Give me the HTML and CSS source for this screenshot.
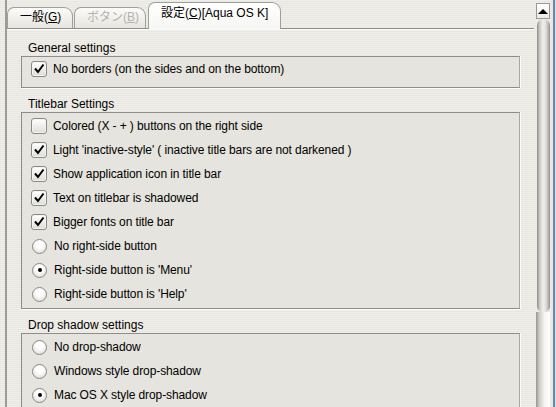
FILE: index.html
```html
<!DOCTYPE html>
<html>
<head>
  <title>設定 - Aqua OS K</title>
  <link rel="stylesheet" href="styles.css">
</head>
<body>

<div class="window">
  <div class="edge-left"></div>

  <div class="main">
    <div class="tabs">
      <div class="tab">一般(<u>G</u>)</div>
      <div class="tab disabled">ボタン(<u>B</u>)</div>
      <div class="tab active">設定(<u>C</u>)[Aqua OS K]</div>
    </div>

    <div class="panel">
      <div class="group-label">General settings</div>
      <div class="group group-general">
        <div class="row"><span class="check on"><svg viewBox="0 0 16 16"><path d="M4 7.5 L7 11 L12.5 3.5"/></svg></span>No borders (on the sides and on the bottom)</div>
      </div>

      <div class="group-label">Titlebar Settings</div>
      <div class="group group-titlebar">
        <div class="row"><span class="check"></span>Colored (X - + ) buttons on the right side</div>
        <div class="row"><span class="check on"><svg viewBox="0 0 16 16"><path d="M4 7.5 L7 11 L12.5 3.5"/></svg></span>Light 'inactive-style' ( inactive title bars are not darkened )</div>
        <div class="row"><span class="check on"><svg viewBox="0 0 16 16"><path d="M4 7.5 L7 11 L12.5 3.5"/></svg></span>Show application icon in title bar</div>
        <div class="row"><span class="check on"><svg viewBox="0 0 16 16"><path d="M4 7.5 L7 11 L12.5 3.5"/></svg></span>Text on titlebar is shadowed</div>
        <div class="row"><span class="check on"><svg viewBox="0 0 16 16"><path d="M4 7.5 L7 11 L12.5 3.5"/></svg></span>Bigger fonts on title bar</div>
        <div class="row"><span class="radio"></span>No right-side button</div>
        <div class="row"><span class="radio on"></span>Right-side button is 'Menu'</div>
        <div class="row"><span class="radio"></span>Right-side button is 'Help'</div>
      </div>

      <div class="group-label">Drop shadow settings</div>
      <div class="group group-shadow">
        <div class="row"><span class="radio"></span>No drop-shadow</div>
        <div class="row"><span class="radio"></span>Windows style drop-shadow</div>
        <div class="row"><span class="radio on"></span>Mac OS X style drop-shadow</div>
      </div>
    </div>
  </div>

  <div class="scrollbar">
    <div class="scroll-up"></div>
    <div class="thumb"></div>
    <div class="track"></div>
  </div>

  <div class="edge-right"></div>
</div>

</body>
</html>
```

FILE: styles.css
```css
body {
  margin: 0;
  width: 556px;
  height: 407px;
  overflow: hidden;
  font-family: "Liberation Sans", "Noto Sans CJK JP", sans-serif;
  font-size: 12px;
  color: #000;
  background: repeating-linear-gradient(#efeee9 0 1px, #e8e7e1 1px 2px);
}

.window {
  display: flex;
  height: 407px;
}

.edge-left {
  width: 5px;
  border-right: 2px solid #9d9c97;
}

.main {
  width: 527px;
  display: flex;
  flex-direction: column;
  overflow: hidden;
}

/* tabs */
.tabs {
  display: flex;
  align-items: flex-end;
  flex-shrink: 0;
  height: 28px;
  gap: 1px;
}

.tab {
  height: 20px;
  line-height: 19px;
  padding: 0 12px 0 12px;
  border: 1px solid #9f9e99;
  border-bottom: none;
  border-radius: 7px 9px 0 0;
  background: linear-gradient(#fbfbf9, #e6e5e0);
  white-space: nowrap;
}

.tab:first-child { width: 40px; }

.tab.disabled {
  color: #b4b3ae;
  width: 46px;
}

.tab.active {
  height: 26px;
  line-height: 21px;
  margin-left: 1px;
  margin-bottom: -1px;
  position: relative;
  z-index: 1;
  background: linear-gradient(#ffffff, #f6f6f4);
  width: 107px;
}

.tab u { text-decoration-thickness: 1px; text-underline-offset: 1px; }

/* panel */
.panel {
  flex: 1;
  min-height: 0;
  border-top: 1px solid #8f8e89;
  box-shadow: inset 0 1px 0 #fbfbf9;
  padding: 11px 14px 0 14px;
}

.group-label {
  height: 16px;
  line-height: 16px;
  padding-left: 7px;
}

.group {
  background: #e5e4de;
  border: 1px solid #8e8d88;
  border-right-color: #a8a7a2;
  box-shadow: 0 1px 0 #fbfbf9, 1px 0 0 #fbfbf9;
  margin-bottom: 8px;
  padding: 0 0 6px 0;
}

.group-titlebar { padding: 1px 0 2px 0; }
.group-shadow { padding-top: 1px; }

.row {
  height: 24px;
  display: flex;
  align-items: center;
  padding-left: 9px;
  gap: 6px;
  white-space: nowrap;
  letter-spacing: -0.1px;
}

.check {
  width: 14px;
  height: 14px;
  border: 1px solid #8a8984;
  border-radius: 3px;
  background: linear-gradient(#ffffff, #dddcd7);
  box-shadow: inset 0 0 0 1px #f4f4f2;
  display: flex;
}

.check svg {
  width: 16px;
  height: 16px;
  margin: -1px;
}

.check path {
  fill: none;
  stroke: #000;
  stroke-width: 2;
}

.radio {
  width: 13px;
  height: 13px;
  margin: 0 1px;
  border: 1px solid #8a8984;
  border-radius: 50%;
  background: radial-gradient(circle at 50% 35%, #ffffff 30%, #d6d5d0);
  display: flex;
  align-items: center;
  justify-content: center;
}

.radio.on::after {
  content: "";
  width: 4px;
  height: 4px;
  border-radius: 50%;
  background: #000;
}

/* scrollbar */
.scrollbar {
  width: 15px;
  padding-left: 2px;
  display: flex;
  flex-direction: column;
}

.scroll-up {
  margin-top: 3px;
  width: 12px;
  height: 14px;
  border: 1px solid #9a9994;
  background: linear-gradient(#ffffff, #ecebe7);
  display: flex;
  align-items: center;
  justify-content: center;
}

.scroll-up::after {
  content: "";
  border-left: 5px solid transparent;
  border-right: 5px solid transparent;
  border-bottom: 5px solid #000;
}

.thumb {
  width: 13px;
  height: 293px;
  flex-shrink: 0;
  margin-left: 1px;
  border-radius: 7px 7px 6px 6px;
  background: linear-gradient(90deg, #8e8d89, #c9c8c4 20%, #efefed 45%, #e4e3e0 65%, #bdbcb8 85%, #8e8d89);
}

.track {
  flex: 1;
  width: 14px;
  background: linear-gradient(90deg, #97968f, #cfcec9 25%, #f4f4f2 60%, #ffffff);
}

.edge-right {
  width: 5px;
  border-left: 2px solid #e9e8e3;
  box-sizing: border-box;
  background: linear-gradient(90deg, #6d88ad 0 2px, #d7dee8 2px);
}
```
